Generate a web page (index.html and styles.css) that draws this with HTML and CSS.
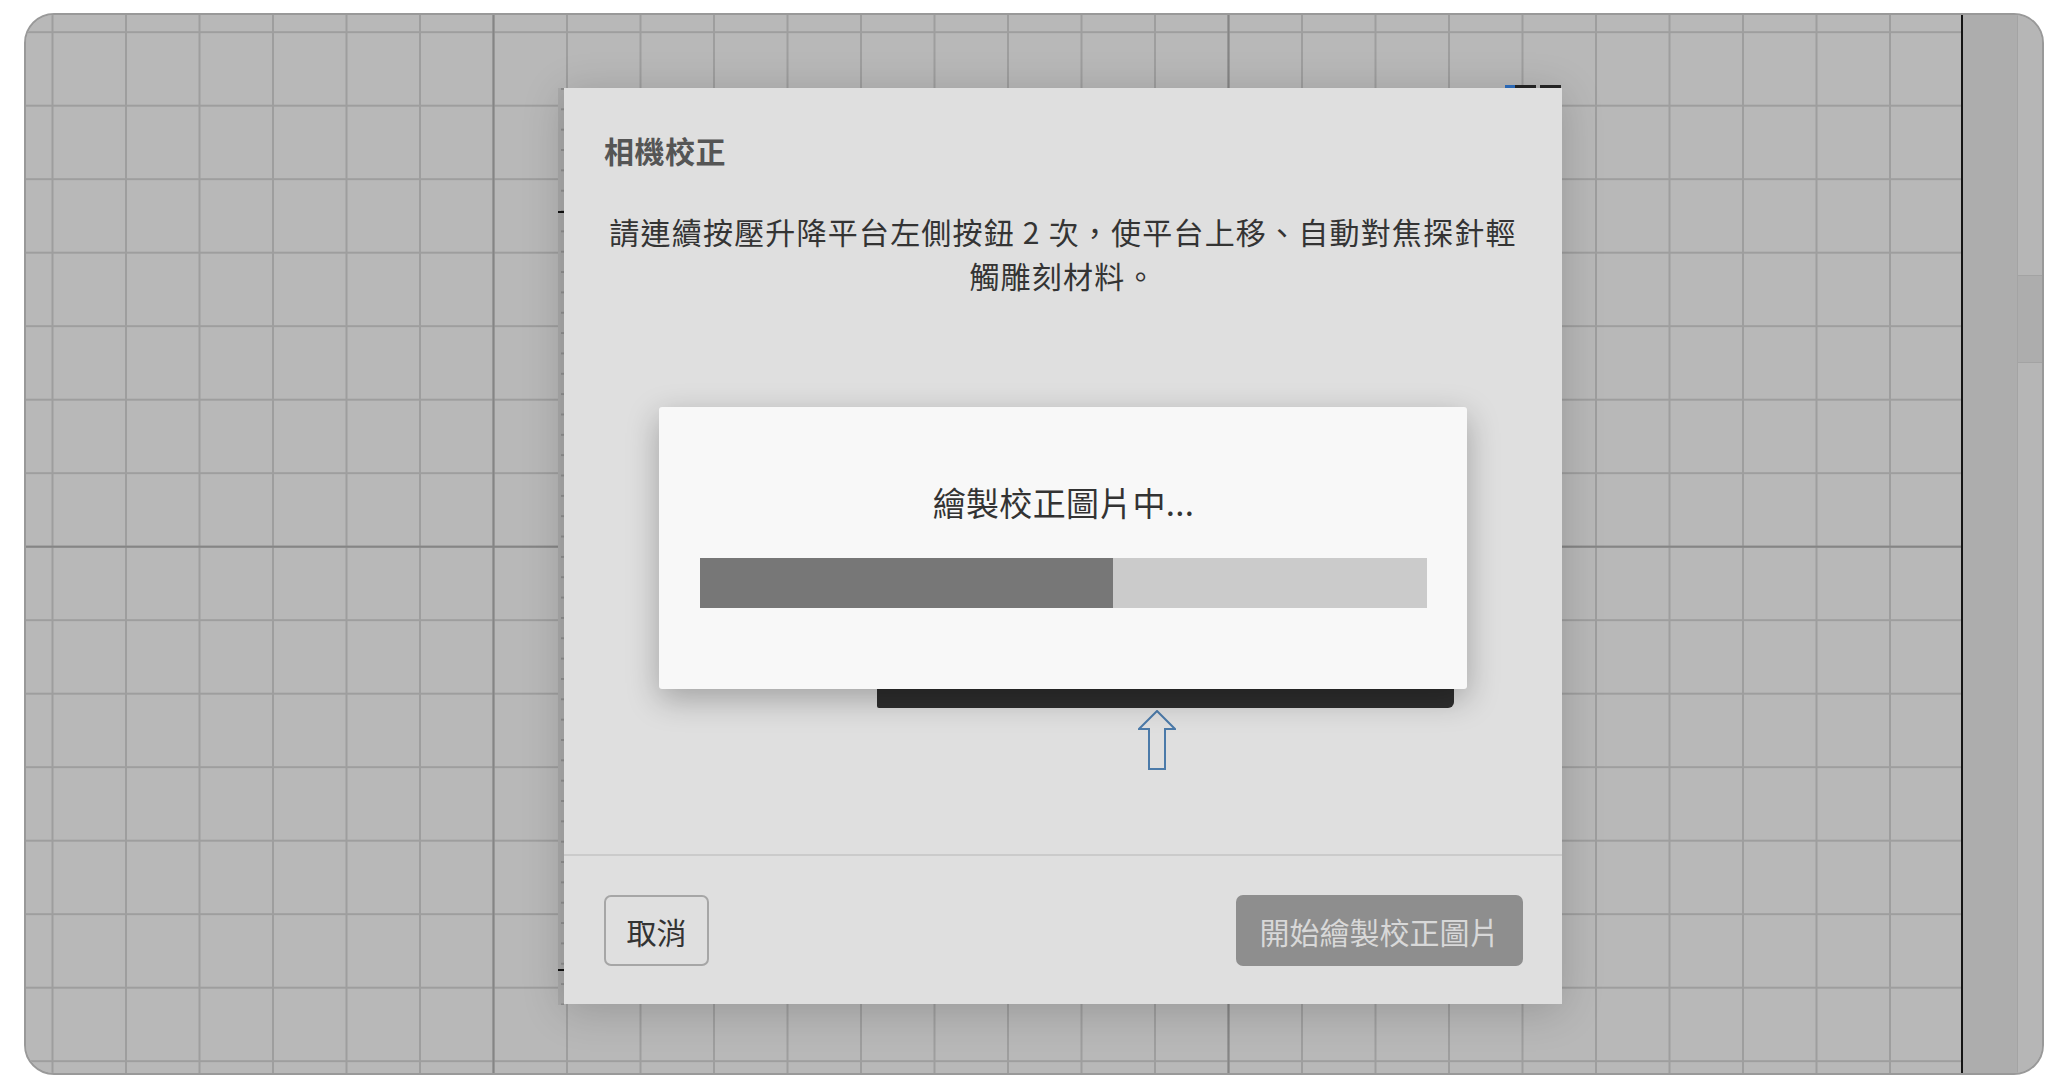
FILE: index.html
```html
<!DOCTYPE html>
<html lang="zh-Hant">
<head>
<meta charset="utf-8">
<title>相機校正</title>
<link rel="stylesheet" href="styles.css">
</head>
<body>
<div class="app">
  <div class="canvas"></div>
  <div class="side-panel"></div>
  <div class="scroll-track"><div class="scroll-thumb"></div></div>
</div>

<div class="ruler-v"></div>
<div class="ruler-h"><span class="mark mark-blue"></span><span class="mark mark-long"></span><span class="mark mark-end"></span></div>

<section class="dialog">
  <div class="dialog-body">
    <h2 class="dialog-title">相機校正</h2>
    <p class="dialog-text">請連續按壓升降平台左側按鈕 2 次，使平台上移、自動對焦探針輕觸雕刻材料。</p>
    <div class="illustration">
      <div class="platform"><span class="platform-dot"></span></div>
      <svg class="arrow" width="38" height="60" viewBox="0 0 38 60">
        <path d="M19 1 L37 19 L27 19 L27 59 L11 59 L11 19 L1 19 Z" fill="none" stroke="#4b7aa9" stroke-width="2" stroke-linejoin="miter"/>
      </svg>
    </div>
  </div>
  <div class="dialog-footer">
    <button class="btn btn-outline">取消</button>
    <button class="btn btn-primary" disabled>開始繪製校正圖片</button>
  </div>
</section>

<div class="progress-modal">
  <div class="progress-label">繪製校正圖片中...</div>
  <div class="progress-track"><div class="progress-fill" style="width:56.8%"></div></div>
</div>
</body>
</html>
```

FILE: styles.css
```css
html, body {
  margin: 0;
  padding: 0;
  background: #ffffff;
  font-family: "Noto Sans CJK TC", "Noto Sans", sans-serif;
}

body {
  width: 2058px;
  height: 1092px;
  position: relative;
  overflow: hidden;
}

.app {
  box-sizing: border-box;
  margin: 13px 0 0 24px;
  width: 2020px;
  height: 1062px;
  border: 2px solid #999999;
  border-radius: 30px;
  overflow: hidden;
  display: flex;
  background: #b8b8b8;
}

.canvas {
  flex: 1;
  background-color: #b8b8b8;
  background-image:
    linear-gradient(to right, #858585 0, #858585 2px, transparent 2px),
    linear-gradient(to bottom, #858585 0, #858585 2px, transparent 2px),
    linear-gradient(to right, #9e9e9e 0, #9e9e9e 2px, transparent 2px),
    linear-gradient(to bottom, #9e9e9e 0, #9e9e9e 2px, transparent 2px);
  background-size: 735px 100%, 100% 735px, 73.5px 100%, 100% 73.5px;
  background-position: 466.5px 0, 0 530.7px, 25.5px 0, 0 16.2px;
}

.side-panel {
  width: 54px;
  border-left: 2px solid #151515;
  background: #adadad;
}

.scroll-track {
  width: 24px;
  border-left: 1px solid #a4a4a4;
  background: #b6b6b6;
  padding-top: 260px;
}

.scroll-thumb {
  height: 86px;
  background: #adadad;
  border-top: 1px solid #a3a3a3;
  border-bottom: 1px solid #a3a3a3;
}

/* rulers peeking out from behind the dialog */
.ruler-v {
  position: absolute;
  left: 558px;
  top: 88px;
  width: 6px;
  height: 917px;
  background-color: #ababab;
  background-image: linear-gradient(to bottom, #8f8f8f 0, #8f8f8f 2px, transparent 2px);
  background-size: 3px 20.35px;
  background-position: 3px 0;
  background-repeat: repeat-y;
}

.ruler-v::before,
.ruler-v::after {
  content: "";
  position: absolute;
  left: 0;
  width: 6px;
  height: 2px;
  background: #111;
}

.ruler-v::before { top: 123px; }
.ruler-v::after { top: 881px; }

.ruler-h {
  position: absolute;
  left: 1505px;
  top: 85px;
  display: flex;
  height: 3px;
}

.mark {
  display: block;
  height: 3px;
  background: #262626;
}

.mark-blue { width: 10px; background: #2e6fc0; }
.mark-long { width: 21px; margin-right: 4px; }
.mark-end { width: 21px; }

/* dialog */
.dialog {
  position: absolute;
  left: 564px;
  top: 88px;
  width: 998px;
  height: 916px;
  background: #dfdfdf;
  box-shadow: 0 6px 40px rgba(0, 0, 0, 0.18);
  display: flex;
  flex-direction: column;
}

.dialog-body {
  flex: 1;
  padding: 41px 40px 0;
  display: flex;
  flex-direction: column;
}

.dialog-title {
  margin: 0;
  font-size: 30px;
  line-height: 42px;
  font-weight: 700;
  color: #555555;
  letter-spacing: 0.5px;
}

.dialog-text {
  margin: 38px 0 0;
  font-size: 30px;
  line-height: 44px;
  color: #343434;
  text-align: center;
  letter-spacing: 1.2px;
}

.illustration {
  margin-top: 122px;
  display: flex;
  flex-direction: column;
  align-items: flex-start;
}

.platform {
  position: relative;
  margin-left: 273px;
  width: 577px;
  height: 289px;
  background: #2e2e2e;
  border-radius: 0 0 6px 2px;
}

.platform-dot {
  position: absolute;
  left: 113px;
  top: 250px;
  width: 16px;
  height: 16px;
  border: 2px solid #8a8a8a;
  border-radius: 50%;
}

.arrow {
  display: block;
  margin: 2px 0 0 534px;
}

.dialog-footer {
  height: 109px;
  border-top: 2px solid #cbcbcb;
  padding: 39px 39px 0 40px;
  display: flex;
  justify-content: space-between;
  align-items: flex-start;
}

.btn {
  box-sizing: border-box;
  height: 71px;
  padding: 0;
  font-family: "Noto Sans CJK TC", "Noto Sans", sans-serif;
  font-size: 30px;
  line-height: 1;
  border-radius: 7px;
  white-space: nowrap;
  text-align: center;
}

.btn-outline {
  width: 105px;
  background: transparent;
  border: 2px solid #a6a6a6;
  color: #333333;
}

.btn-primary {
  width: 287px;
  background: #8e8e8e;
  border: none;
  color: #d8d8d8;
}

/* progress overlay */
.progress-modal {
  position: absolute;
  left: 659px;
  top: 407px;
  width: 808px;
  height: 282px;
  box-sizing: border-box;
  padding: 72px 40px 0 41px;
  background: #f8f8f8;
  border-radius: 3px;
  box-shadow: 0 10px 32px rgba(0, 0, 0, 0.28);
  display: flex;
  flex-direction: column;
}

.progress-label {
  font-size: 33px;
  line-height: 46px;
  color: #333333;
  text-align: center;
  letter-spacing: 0.3px;
}

.progress-track {
  margin-top: 33px;
  height: 50px;
  background: #cbcbcb;
}

.progress-fill {
  height: 100%;
  background: #777777;
}
```
